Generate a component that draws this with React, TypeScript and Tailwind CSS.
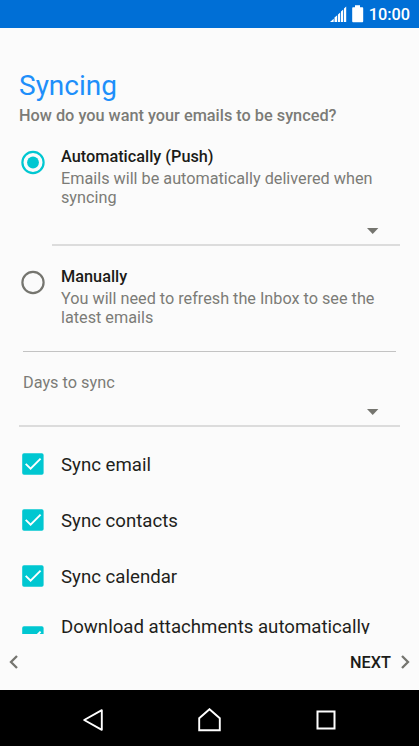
import type { ReactNode } from 'react';

function Radio({ checked = false }: { checked?: boolean }) {
  const color = checked ? '#00c7d1' : '#75756f';
  return (
    <svg className="block h-[25px] w-6 shrink-0" viewBox="0 0 24 25" fill="none">
      <circle cx="12" cy="12.5" r="10.6" stroke={color} strokeWidth="2.2" />
      {checked && <circle cx="12" cy="12.5" r="5.9" fill={color} />}
    </svg>
  );
}

function Checkbox() {
  return (
    <svg className="block h-[22px] w-[22px] shrink-0" viewBox="0 0 22 22" fill="none">
      <rect x="0.2" y="0.3" width="21.4" height="21.4" rx="1.8" fill="#00c7d1" />
      <path d="M3.7 10.8l4.9 4.9L18.6 5.6" stroke="#fff" strokeWidth="1.9" />
    </svg>
  );
}

function Option({ title, checked, children }: { title: string; checked?: boolean; children: ReactNode }) {
  return (
    <div className="flex h-[61px] pl-[21px]">
      <div className="mt-[3px] h-6">
        <Radio checked={checked} />
      </div>
      <div className="ml-4 whitespace-nowrap text-[16.3px] leading-[19px]">
        <p className="h-[22px] font-medium text-[#1b1b18]">{title}</p>
        <p className="text-[16.23px] text-[#7b7b77]">{children}</p>
      </div>
    </div>
  );
}

function Dropdown({ wide = false }: { wide?: boolean }) {
  return (
    <div
      className={`mr-[19px] flex h-[20px] justify-end border-b-2 border-[#dcdcdc] pr-[21px] ${wide ? 'ml-[19px]' : 'ml-[52px]'}`}
    >
      <svg className="mt-[2px] block h-[6px] w-[12px]" viewBox="0 0 12 6">
        <path d="M0 0h11.4L5.7 6z" fill="#75756f" />
      </svg>
    </div>
  );
}

function SyncRow({ label }: { label: string }) {
  return (
    <label className="flex h-14 items-center gap-[17px] pl-[22px]">
      <Checkbox />
      <span className="pt-[3px] text-[18.65px] text-[#1f1f1c]">{label}</span>
    </label>
  );
}

export default function App() {
  return (
    <div className="flex h-[746px] w-[419px] flex-col overflow-hidden bg-[#fbfbfb] font-[Roboto,sans-serif]">
      <header className="flex h-7 shrink-0 items-center justify-end bg-[#006fd6] pr-[9px] text-white">
        <svg className="mr-[5px] block h-[20px] w-[34px]" viewBox="0 0 34 20" fill="#fff">
          <path d="M0 18L3.7 14.7V18zM4.5 18V13.6L7.2 11.2V18zM8 18V10.4L10.2 8.4V18zM11 18V7.6L13.2 5.6V18zM14 18V4.6L16.2 2.6V18z" />
          <path d="M25 1.2h5v2H32.4q.8 0 .8 1v13q0 1-.8 1H23q-.8 0-.8-1v-13q0-1 .8-1h2z" />
        </svg>
        <span className="pt-[2px] text-[16.3px] font-medium leading-7">10:00</span>
      </header>

      <main className="h-[606px] shrink-0 overflow-hidden">
        <h1 className="mt-[42px] h-9 pl-[19px] text-[28px] font-normal leading-8 text-[#1e8ffa]">Syncing</h1>
        <p className="h-[41px] pl-[19px] text-[16.3px] font-medium leading-5 text-[#7b7b77]">
          How do you want your emails to be synced?
        </p>

        <Option title="Automatically (Push)" checked>
          Emails will be automatically delivered when
          <br />
          syncing
        </Option>
        <div className="pt-[18px]">
          <Dropdown />
        </div>
        <div className="pt-[21px]">
          <Option title="Manually">
            You will need to refresh the Inbox to see the
            <br />
            latest emails
          </Option>
        </div>

        <hr className="ml-[23px] mr-[23px] mt-[23px] border-t border-[#c3c3c3]" />
        <p className="mt-[21px] h-[34px] pl-[23px] text-[16.3px] leading-5 text-[#7b7b77]">Days to sync</p>
        <Dropdown wide />

        <div className="pt-[9px]">
          <SyncRow label="Sync email" />
          <SyncRow label="Sync contacts" />
          <SyncRow label="Sync calendar" />
          <div className="flex gap-[17px] pl-[22px] pt-[11px]">
            <div className="pt-[11px]">
              <Checkbox />
            </div>
            <span className="pt-px text-[18.65px] leading-[22px] text-[#1f1f1c]">Download attachments automatically</span>
          </div>
        </div>
      </main>

      <footer className="flex h-14 shrink-0 items-center justify-between pl-[9px] pr-[9px]">
        <svg className="block h-[14px] w-[9px]" viewBox="0 0 9 14" fill="none" stroke="#75756f" strokeWidth="2.3">
          <path d="M8 1L2 7l6 6" />
        </svg>
        <div className="flex items-center gap-[10px]">
          <span className="pt-[2px] text-[16.3px] font-medium text-[#1b1b18]">NEXT</span>
          <svg className="block h-[14px] w-[9px]" viewBox="0 0 9 14" fill="none" stroke="#75756f" strokeWidth="2.3">
            <path d="M1 1l6 6-6 6" />
          </svg>
        </div>
      </footer>

      <nav className="flex h-14 shrink-0 items-center justify-between bg-black pl-[83px] pr-[83px]">
        <svg className="mt-[4px] block h-[24px] w-[20px]" viewBox="0 0 20 24" fill="none" stroke="#fff" strokeWidth="1.9" strokeLinejoin="round">
          <path d="M1.2 12L18.8 2.2v19.6z" />
        </svg>
        <svg className="mt-[3px] block h-[24px] w-[24px]" viewBox="0 0 24 24" fill="none" stroke="#fff" strokeWidth="1.9">
          <path d="M1.2 22.3V10.2L11.5 1.2l10.3 9v12.1z" />
        </svg>
        <svg className="mt-[3px] block h-[20px] w-[20px]" viewBox="0 0 20 20" fill="none" stroke="#fff" strokeWidth="2">
          <rect x="1.5" y="1.5" width="17" height="17" />
        </svg>
      </nav>
    </div>
  );
}
